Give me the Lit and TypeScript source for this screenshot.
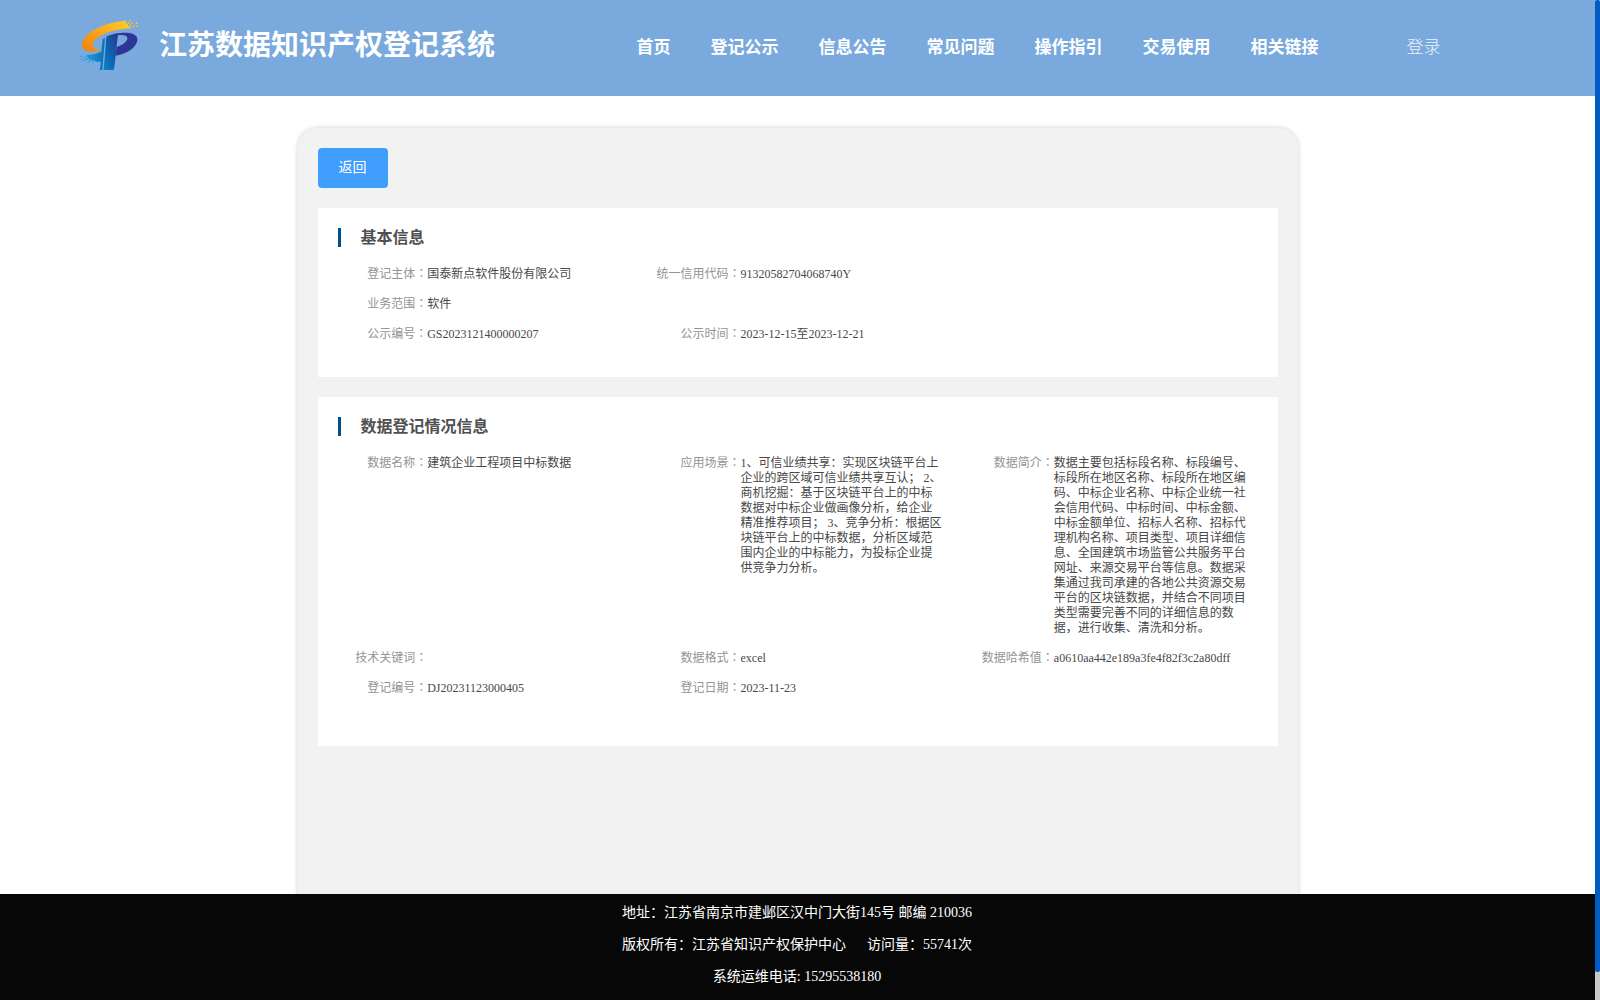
import { LitElement, html, css, svg } from "lit";
import { customElement, property } from "lit/decorators.js";

const CJK = css`"Liberation Serif", "Noto Sans CJK SC", serif`;

@customElement("site-logo")
class SiteLogo extends LitElement {
  static styles = css`
    :host { display: block; width: 80px; height: 70px; }
    svg { display: block; }
  `;
  render() {
    const orangeBits = [[163, 31, 6], [172, 36, 6], [178, 30, 5], [183, 38, 5], [190, 45, 5], [197, 37, 6], [199, 47, 5], [177, 44, 6], [168, 42, 6], [187, 50, 4]];
    const blueBits = [[31, 137, 5], [31, 147, 4], [39, 141, 5], [40, 149, 5], [47, 145, 6], [55, 153, 5], [58, 148, 6], [66, 155, 5], [47, 137, 6], [65, 148, 6]];
    return html`<svg width="80" height="70" viewBox="0 0 240 210">
      <defs>
        <linearGradient id="o" x1="0" y1="1" x2="1" y2="0">
          <stop offset="0" stop-color="#f07f0c" /><stop offset=".45" stop-color="#f9a21b" /><stop offset="1" stop-color="#ffd21f" />
        </linearGradient>
        <linearGradient id="b" x1="0" y1="0" x2="1" y2="0">
          <stop offset="0" stop-color="#1f9ad8" /><stop offset="1" stop-color="#0a6fb8" />
        </linearGradient>
        <linearGradient id="s" x1="0" y1="1" x2="1" y2="0">
          <stop offset="0" stop-color="#0b84c6" /><stop offset=".5" stop-color="#0d5fae" /><stop offset="1" stop-color="#2b3990" />
        </linearGradient>
      </defs>
      <path fill="url(#o)" d="M163 33C100 38 36 70 36 104C36 120 50 126 85 125L91 120C66 121 62 102 78 87C100 68 145 56 185 55L176 49L170 41Z" />
      <path fill="#2e3797" d="M106 82C125 71 155 67 178 69C198 72 206 83 201 96C193 117 169 132 136 137L140 111C157 105 174 93 172 83C170 75 158 73 143 76L141 84Z" />
      <path fill="url(#s)" d="M109 83C118 76 132 74 144 72L137 137L132 178Q131 180 128 180H101Z" />
      <path fill="url(#b)" d="M98 88L105 83L97 180H89L93 155H80L68 150L55 146L50 135C66 135 80 131 94 125Z" />
      ${orangeBits.map(([x, y, s]) => svg`<rect x=${x} y=${y} width=${s} height=${s - 1} fill="#fbc723" />`)}
      ${blueBits.map(([x, y, s]) => svg`<rect x=${x} y=${y} width=${s} height=${s - 1} fill="#2a9fdc" />`)}
    </svg>`;
  }
}

@customElement("info-section")
class InfoSection extends LitElement {
  @property() heading = "";
  @property({ attribute: false }) rows: string[][][] = [];
  static styles = css`
    :host { display: block; background: #fff; padding: 20px 20px 0 0; box-sizing: border-box; }
    .head { display: flex; align-items: center; margin: 0 0 20px 20px; height: 19px; border-left: 3px solid #00508e;
      padding-left: 20px; font: 700 16px/19px ${CJK}; color: #505050; }
    .row { display: grid; grid-template-columns: repeat(3, 1fr); margin-bottom: 15px; }
    .cell { display: grid; grid-template-columns: 35% 65%; font: 12px/15px ${CJK}; min-height: 15px; }
    .label { text-align: right; color: #949494; white-space: nowrap; }
    .value { color: #484848; overflow-wrap: anywhere; }
    .colon { font-family: "Liberation Serif", "Noto Sans CJK TC", serif; }
  `;
  render() {
    return html`<div class="head">${this.heading}</div>
      ${this.rows.map((row) => html`<div class="row">${row.map(([label, value]) => html`<div class="cell">
        <div class="label">${label}<span class="colon">：</span></div><div class="value">${value}</div></div>`)}</div>`)}`;
  }
}

const BASIC = [
  [["登记主体", "国泰新点软件股份有限公司"], ["统一信用代码", "91320582704068740Y"]],
  [["业务范围", "软件"]],
  [["公示编号", "GS2023121400000207"], ["公示时间", "2023-12-15至2023-12-21"]],
];
const DATA = [
  [
    ["数据名称", "建筑企业工程项目中标数据"],
    ["应用场景", "1、可信业绩共享：实现区块链平台上企业的跨区域可信业绩共享互认； 2、商机挖掘：基于区块链平台上的中标数据对中标企业做画像分析，给企业精准推荐项目； 3、竞争分析：根据区块链平台上的中标数据，分析区域范围内企业的中标能力，为投标企业提供竞争力分析。"],
    ["数据简介", "数据主要包括标段名称、标段编号、标段所在地区名称、标段所在地区编码、中标企业名称、中标企业统一社会信用代码、中标时间、中标金额、中标金额单位、招标人名称、招标代理机构名称、项目类型、项目详细信息、全国建筑市场监管公共服务平台网址、来源交易平台等信息。数据采集通过我司承建的各地公共资源交易平台的区块链数据，并结合不同项目类型需要完善不同的详细信息的数据，进行收集、清洗和分析。"],
  ],
  [["技术关键词", ""], ["数据格式", "excel"], ["数据哈希值", "a0610aa442e189a3fe4f82f3c2a80dff"]],
  [["登记编号", "DJ20231123000405"], ["登记日期", "2023-11-23"]],
];
const NAV = ["首页", "登记公示", "信息公告", "常见问题", "操作指引", "交易使用", "相关链接"];

@customElement("app-root")
class AppRoot extends LitElement {
  static styles = css`
    :host { display: grid; grid-template-columns: 1fr 5px; height: 1000px; background: #fff; font-family: ${CJK}; overflow: hidden; }
    .page { display: flex; flex-direction: column; height: 1000px; overflow: hidden; }
    .header { display: flex; flex: none; height: 96px; background: #79a9dd; color: #fff; box-sizing: border-box; }
    .logo { margin: 10px 0 0 70px; }
    .title { margin: 0 0 0 9px; width: 457.5px; font-size: 28px; font-weight: 700; line-height: 92px; white-space: nowrap; }
    .nav { display: flex; }
    .item { padding: 0 20px; font-size: 17px; font-weight: 700; line-height: 96px; white-space: nowrap; }
    .login { margin-left: 68px; font-size: 17px; font-weight: 300; line-height: 96px; color: #eef4fb; }
    .main { flex: 1; min-height: 0; overflow: hidden; display: flex; justify-content: center; }
    .card { width: 1000px; height: 900px; margin-top: 32px; padding: 20px; box-sizing: border-box; background: #f2f2f2;
      border-radius: 20px; box-shadow: 0 0 5px rgba(0, 0, 0, .2); }
    .back { display: block; width: 70px; height: 40px; padding: 0; border: 0; border-radius: 4px; background: #409eff; color: #fff;
      font: 14px/40px ${CJK}; text-align: center; }
    .basic { height: 169px; margin-top: 20px; }
    .data { height: 349px; margin-top: 20px; }
    .footer { flex: none; height: 106px; padding: 3px 1px 0 0; box-sizing: border-box; background: #070707; color: #fff; text-align: center; }
    .line { font-size: 14px; line-height: 32px; white-space: pre; }
    .rail { background: #c8c8c8; }
    .thumb { height: 972px; border-radius: 2px; background: #005bc5; }
  `;
  render() {
    return html`
      <div class="page">
        <div class="header">
          <site-logo class="logo"></site-logo>
          <div class="title">江苏数据知识产权登记系统</div>
          <div class="nav">${NAV.map((n) => html`<div class="item">${n}</div>`)}</div>
          <div class="login">登录</div>
        </div>
        <div class="main">
          <div class="card">
            <button class="back">返回</button>
            <info-section class="basic" heading="基本信息" .rows=${BASIC}></info-section>
            <info-section class="data" heading="数据登记情况信息" .rows=${DATA}></info-section>
          </div>
        </div>
        <div class="footer">
          <div class="line">地址：江苏省南京市建邺区汉中门大街145号 邮编 210036</div>
          <div class="line">版权所有：江苏省知识产权保护中心${"\u00a0".repeat(6)}访问量：55741次</div>
          <div class="line">系统运维电话: 15295538180</div>
        </div>
      </div>
      <div class="rail"><div class="thumb"></div></div>`;
  }
}
